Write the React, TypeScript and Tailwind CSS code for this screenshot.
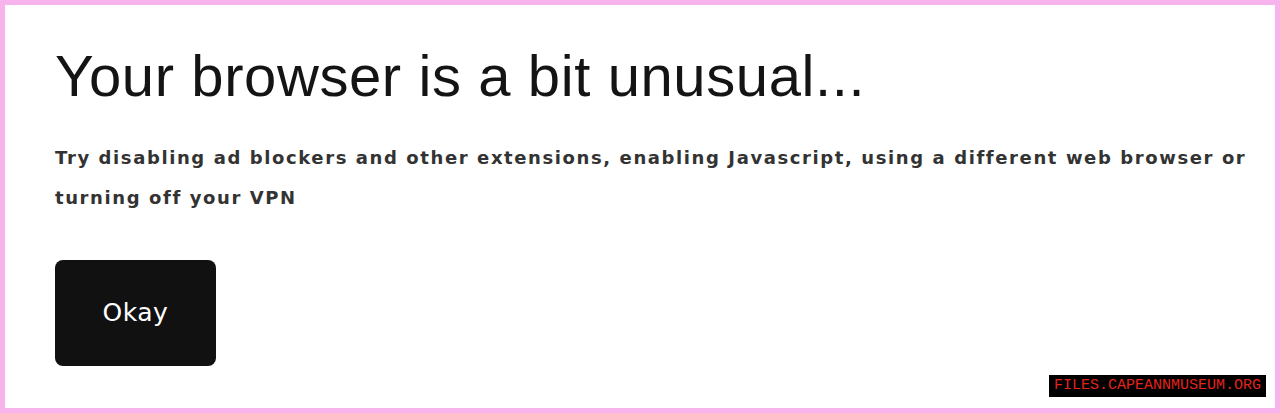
export default function App() {
  return (
    <main className="relative h-[413px] w-[1280px] overflow-hidden border-[5px] border-[#f7b3ec] bg-white">
      <div className="pl-[50px] pt-[38px]">
        <h1 className="font-['Liberation_Sans',Arial,sans-serif] text-[58px] leading-[66px] tracking-[0.6px] text-[#141414]">
          Your browser is a bit unusual...
        </h1>
        <p className="mt-[29px] max-w-[1215px] font-['DejaVu_Sans',sans-serif] text-[18px] font-semibold leading-[40px] tracking-[1.6px] text-[#333]">
          Try disabling ad blockers and other extensions, enabling Javascript, using a different web browser or
          turning off your VPN
        </p>
        <button className="mt-[42px] flex h-[106px] w-[161px] items-center justify-center rounded-[8px] bg-[#111] font-['DejaVu_Sans',sans-serif] text-[25px] tracking-[0.5px] text-white">
          Okay
        </button>
      </div>
      <div className="absolute bottom-[11px] right-[9px] bg-black px-[5px] font-['Liberation_Mono',monospace] text-[15px] leading-[22px] text-[#e3231c]">
        FILES.CAPEANNMUSEUM.ORG
      </div>
    </main>
  );
}
